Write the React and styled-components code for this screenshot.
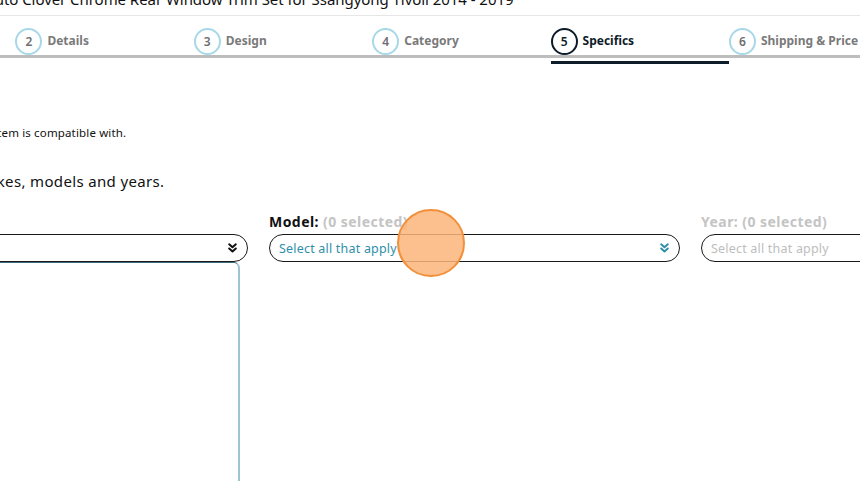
import React from "react";
import styled, { createGlobalStyle } from "styled-components";

const GlobalStyle = createGlobalStyle`
  html, body {
    margin: 0;
    padding: 0;
    background: #fff;
    overflow: hidden;
  }
  body {
    font-family: "Noto Sans", "Open Sans", sans-serif;
    color: #111;
  }
`;

const steps = [
  { n: 1, label: "Photos" },
  { n: 2, label: "Details" },
  { n: 3, label: "Design" },
  { n: 4, label: "Category" },
  { n: 5, label: "Specifics", active: true },
  { n: 6, label: "Shipping & Price" },
  { n: 7, label: "Review" },
];

const columns = [
  { key: "make", title: "Make:", open: true },
  { key: "model", title: "Model:" },
  { key: "year", title: "Year:", disabled: true },
];

const Chevrons = ({ color }) => (
  <svg width="9" height="10" viewBox="0 0 9 10" fill="none">
    <path
      d="M1.2 1.3 L4.5 4.3 L7.8 1.3 M1.2 5.5 L4.5 8.5 L7.8 5.5"
      stroke={color}
      strokeWidth="2"
      strokeLinecap="round"
      strokeLinejoin="round"
    />
  </svg>
);

const App = () => {
  return (
    <>
      <GlobalStyle />
      <Viewport>
        <Page>
          <Title>Listing: Auto Clover Chrome Rear Window Trim Set for Ssangyong Tivoli 2014 - 2019</Title>
          <Divider />
          <Steps>
            {steps.map((s) => (
              <Step key={s.n}>
                <StepHead>
                  <StepNum active={s.active}>{s.n}</StepNum>
                  <StepLabel active={s.active}>{s.label}</StepLabel>
                </StepHead>
                <StepBar active={s.active} />
              </Step>
            ))}
          </Steps>

          <Body>
            <Hint>Please choose the vehicles that this item is compatible with.</Hint>
            <Lead>You can select multiple makes, models and years.</Lead>

            <Pickers>
              {columns.map((c) => (
                <Picker key={c.key}>
                  <PickLabel disabled={c.disabled}>
                    {c.title} <Count>(0 selected)</Count>
                  </PickLabel>
                  <Select>
                    <Placeholder disabled={c.disabled}>
                      {c.open ? "" : "Select all that apply"}
                    </Placeholder>
                    {!c.disabled && (
                      <Chevrons color={c.open ? "#111" : "#2f8fa8"} />
                    )}
                  </Select>
                  {c.open && <OptionList />}
                </Picker>
              ))}
            </Pickers>
          </Body>
        </Page>
        <Cursor />
      </Viewport>
    </>
  );
};

export default App;

const Viewport = styled.div`
  position: relative;
  width: 860px;
  height: 481px;
  overflow: hidden;
`;

const Page = styled.div`
  width: 1300px;
  margin-left: -163px;
  margin-top: -13px;
`;

const Title = styled.h1`
  margin: 0;
  padding-left: 94px;
  font-size: 15px;
  line-height: 24px;
  font-weight: 400;
  letter-spacing: -0.05px;
  color: #111;
  white-space: nowrap;
`;

const Divider = styled.div`
  height: 1px;
  background: #e6e6e6;
  margin-top: 4px;
`;

const Steps = styled.div`
  display: flex;
  padding-top: 10px;
`;

const Step = styled.div`
  width: 178.4px;
  flex: none;
`;

const StepHead = styled.div`
  display: flex;
  align-items: center;
  gap: 5px;
  height: 29px;
  border-bottom: 3px solid #bdbdbd;
`;

const StepNum = styled.div`
  width: 23px;
  height: 23px;
  border-radius: 50%;
  border: 2.5px solid ${(p) => (p.active ? "#0e1c29" : "#a6d8e8")};
  display: flex;
  align-items: center;
  justify-content: center;
  font-size: 12px;
  font-weight: 600;
  color: ${(p) => (p.active ? "#0e1c29" : "#6e6e6e")};
  margin-bottom: -1px;
`;

const StepLabel = styled.span`
  font-size: 12px;
  font-weight: 700;
  color: ${(p) => (p.active ? "#0e1c29" : "#7a7a7a")};
  white-space: nowrap;
`;

const StepBar = styled.div`
  height: 3px;
  margin-top: 3px;
  background: ${(p) => (p.active ? "#0e1c29" : "transparent")};
`;

const Body = styled.div`
  padding-top: 61px;
`;

const Hint = styled.p`
  margin: 0;
  text-indent: -42px;
  font-size: 11.5px;
  line-height: 16px;
  letter-spacing: 0.15px;
  color: #111;
  white-space: nowrap;
`;

const Lead = styled.p`
  margin: 30px 0 0;
  text-indent: -37px;
  font-size: 15px;
  line-height: 20px;
  letter-spacing: 0.35px;
  color: #111;
  white-space: nowrap;
`;

const Pickers = styled.div`
  display: grid;
  grid-template-columns: 411px 411px 411px;
  column-gap: 21px;
  margin-top: 22px;
`;

const Picker = styled.div`
  display: flex;
  flex-direction: column;
`;

const PickLabel = styled.div`
  font-size: 14px;
  font-weight: 700;
  line-height: 18px;
  letter-spacing: 0.45px;
  color: ${(p) => (p.disabled ? "#c4c4c4" : "#111")};
  margin-bottom: 3px;
`;

const Count = styled.span`
  color: #c4c4c4;
`;

const Select = styled.div`
  height: 28px;
  box-sizing: border-box;
  border: 1px solid #1a1a1a;
  border-radius: 14px;
  display: flex;
  align-items: center;
  justify-content: space-between;
  padding: 0 10px 0 9px;
`;

const Placeholder = styled.span`
  font-size: 12.5px;
  letter-spacing: 0.2px;
  color: ${(p) => (p.disabled ? "#bdbdbd" : "#2f8fa8")};
`;

const OptionList = styled.div`
  height: 230px;
  margin-right: 8px;
  border-top: 1px solid #3b6d7e;
  border-right: 2px solid #9cc4d2;
  border-top-right-radius: 6px;
`;

const Cursor = styled.div`
  position: absolute;
  left: 397px;
  top: 209px;
  width: 64px;
  height: 64px;
  border-radius: 50%;
  background: rgba(252, 180, 122, 0.85);
  border: 2px solid #f2903a;
`;
